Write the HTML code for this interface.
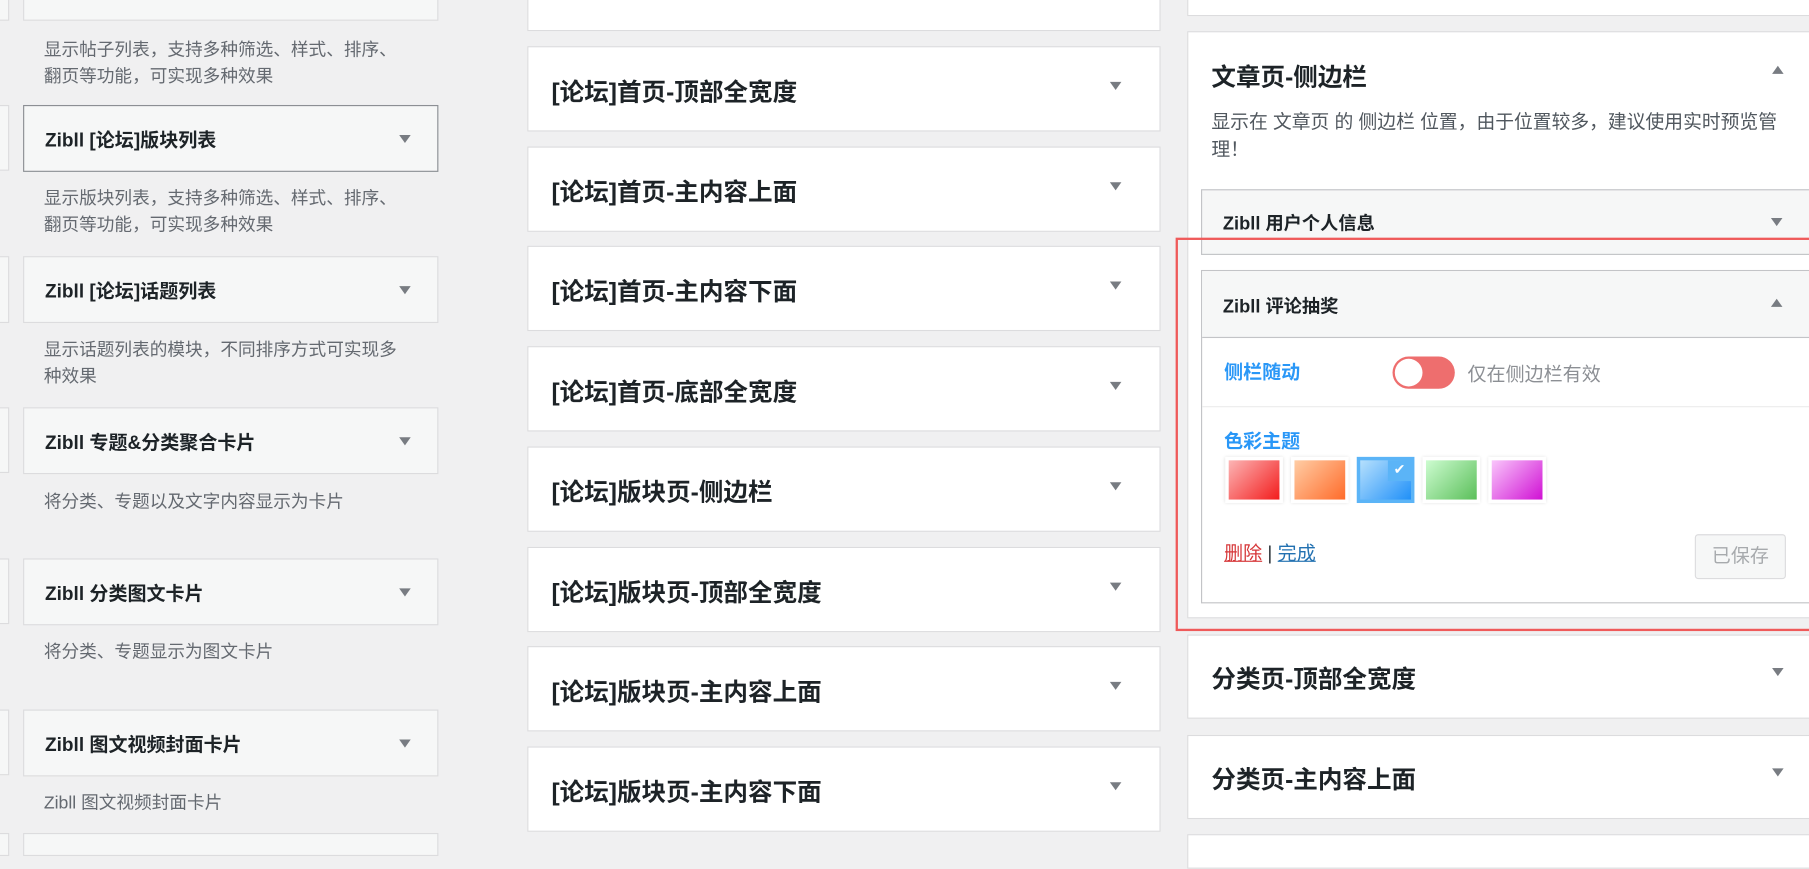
<!DOCTYPE html>
<html><head><meta charset="utf-8"><style>
html,body{margin:0;padding:0;width:1809px;height:843px;overflow:hidden;background:#f0f0f1;}
#w{position:absolute;left:0;top:0;width:1568px;height:731px;transform:scale(1.15370);transform-origin:0 0;font-family:"Liberation Sans","Noto Sans CJK SC",sans-serif;}
.a{position:absolute;box-sizing:border-box;}
.lb{background:#f6f7f7;border:1px solid #dcdcde;}
.lt{font-size:16.5px;font-weight:bold;color:#1d2327;left:18px;top:16px;position:absolute;white-space:nowrap;}
.ar{position:absolute;width:0;height:0;border-left:5px solid transparent;border-right:5px solid transparent;border-top:7px solid #787c82;}
.au{position:absolute;width:0;height:0;border-left:5px solid transparent;border-right:5px solid transparent;border-bottom:7px solid #787c82;}
.d{position:absolute;font-size:15.3px;color:#646970;line-height:23px;left:38px;width:330px;white-space:nowrap;}
.mb{background:#fff;border:1px solid #dcdcde;}
.mt{position:absolute;left:20px;font-size:21.3px;font-weight:bold;color:#1d2327;white-space:nowrap;}
</style></head><body><div id="w">
<div class="a lb" style="left:-10px;top:-5px;width:18px;height:23px"></div>
<div class="a lb" style="left:-10px;top:91px;width:18px;height:57px"></div>
<div class="a lb" style="left:-10px;top:222px;width:18px;height:58px"></div>
<div class="a lb" style="left:-10px;top:353px;width:18px;height:57px"></div>
<div class="a lb" style="left:-10px;top:484px;width:18px;height:57px"></div>
<div class="a lb" style="left:-10px;top:615px;width:18px;height:57px"></div>
<div class="a lb" style="left:-10px;top:722px;width:18px;height:20px"></div>
<div class="a lb" style="left:20px;top:-5px;width:360px;height:23px"></div>
<div class="d" style="top:32px">显示帖子列表，支持多种筛选、样式、排序、<br>翻页等功能，可实现多种效果</div>
<div class="a lb" style="left:20px;top:91px;width:360px;height:58px;border-color:#8c8f94"><span class="lt">Zibll [论坛]版块列表</span><i class="ar" style="left:325px;top:25px"></i></div>
<div class="d" style="top:161px">显示版块列表，支持多种筛选、样式、排序、<br>翻页等功能，可实现多种效果</div>
<div class="a lb" style="left:20px;top:222px;width:360px;height:58px"><span class="lt">Zibll [论坛]话题列表</span><i class="ar" style="left:325px;top:25px"></i></div>
<div class="d" style="top:292px">显示话题列表的模块，不同排序方式可实现多<br>种效果</div>
<div class="a lb" style="left:20px;top:353px;width:360px;height:58px"><span class="lt">Zibll 专题&amp;分类聚合卡片</span><i class="ar" style="left:325px;top:25px"></i></div>
<div class="d" style="top:424px">将分类、专题以及文字内容显示为卡片</div>
<div class="a lb" style="left:20px;top:484px;width:360px;height:58px"><span class="lt">Zibll 分类图文卡片</span><i class="ar" style="left:325px;top:25px"></i></div>
<div class="d" style="top:554px">将分类、专题显示为图文卡片</div>
<div class="a lb" style="left:20px;top:615px;width:360px;height:58px"><span class="lt">Zibll 图文视频封面卡片</span><i class="ar" style="left:325px;top:25px"></i></div>
<div class="d" style="top:685px">Zibll 图文视频封面卡片</div>
<div class="a lb" style="left:20px;top:722px;width:360px;height:20px"></div>
<div class="a mb" style="left:457px;top:-5px;width:549px;height:32px"></div>
<div class="a mb" style="left:457px;top:40px;width:549px;height:74px"><span class="mt" style="top:22px">[论坛]首页-顶部全宽度</span><i class="ar" style="left:504px;top:30px"></i></div>
<div class="a mb" style="left:457px;top:127px;width:549px;height:74px"><span class="mt" style="top:22px">[论坛]首页-主内容上面</span><i class="ar" style="left:504px;top:30px"></i></div>
<div class="a mb" style="left:457px;top:213px;width:549px;height:74px"><span class="mt" style="top:22px">[论坛]首页-主内容下面</span><i class="ar" style="left:504px;top:30px"></i></div>
<div class="a mb" style="left:457px;top:300px;width:549px;height:74px"><span class="mt" style="top:22px">[论坛]首页-底部全宽度</span><i class="ar" style="left:504px;top:30px"></i></div>
<div class="a mb" style="left:457px;top:387px;width:549px;height:74px"><span class="mt" style="top:22px">[论坛]版块页-侧边栏</span><i class="ar" style="left:504px;top:30px"></i></div>
<div class="a mb" style="left:457px;top:474px;width:549px;height:74px"><span class="mt" style="top:22px">[论坛]版块页-顶部全宽度</span><i class="ar" style="left:504px;top:30px"></i></div>
<div class="a mb" style="left:457px;top:560px;width:549px;height:74px"><span class="mt" style="top:22px">[论坛]版块页-主内容上面</span><i class="ar" style="left:504px;top:30px"></i></div>
<div class="a mb" style="left:457px;top:647px;width:549px;height:74px"><span class="mt" style="top:22px">[论坛]版块页-主内容下面</span><i class="ar" style="left:504px;top:30px"></i></div>
<div class="a mb" style="left:1029px;top:-5px;width:550px;height:19px"></div>
<div class="a mb" style="left:1029px;top:27px;width:550px;height:509px">
 <span class="mt" style="top:22px">文章页-侧边栏</span><i class="au" style="left:506px;top:29px"></i>
 <div style="position:absolute;left:20px;top:66px;width:500px;font-size:16.3px;line-height:24px;color:#50575e">显示在 文章页 的 侧边栏 位置，由于位置较多，建议使用实时预览管理！</div>
</div>
<div class="a lb" style="left:1041px;top:164px;width:540px;height:57px;border-color:#c3c4c7"><span class="lt" style="top:16px;font-size:15.8px">Zibll 用户个人信息</span><i class="ar" style="left:493px;top:24px"></i></div>
<div class="a" style="left:1041px;top:234px;width:540px;height:289px;background:#fff;border:1px solid #c3c4c7">
 <div style="position:absolute;left:0;top:0;right:0;height:57px;background:#f6f7f7;border-bottom:1px solid #c3c4c7"><span class="lt" style="top:18px;font-size:15.8px">Zibll 评论抽奖</span><i class="au" style="left:493px;top:24px"></i></div>
 <span style="position:absolute;left:19px;top:74px;color:#2997f7;font-weight:bold;font-size:16.5px">侧栏随动</span>
 <div style="position:absolute;left:165px;top:74px;width:54px;height:28px;border-radius:14px;background:#ee6e6e"><div style="position:absolute;left:2px;top:2px;width:24px;height:24px;border-radius:50%;background:#fff"></div></div>
 <span style="position:absolute;left:230px;top:76px;color:#8c8f94;font-size:16.5px">仅在侧边栏有效</span>
 <div style="position:absolute;left:0;right:0;top:117px;border-top:1px solid #ececec"></div>
 <span style="position:absolute;left:19px;top:134px;color:#2997f7;font-weight:bold;font-size:16.5px">色彩主题</span>
 <div style="position:absolute;left:20px;top:161px;width:50px;height:40px;box-shadow:0 0 3px #ddd;background:#fff"><div style="margin:3px;height:34px;background:linear-gradient(135deg,#fcb5b5,#f31c1c)"></div></div>
 <div style="position:absolute;left:77px;top:161px;width:50px;height:40px;box-shadow:0 0 3px #ddd;background:#fff"><div style="margin:3px;height:34px;background:linear-gradient(135deg,#ffcda5,#ff6b2a)"></div></div>
 <div style="position:absolute;left:134px;top:161px;width:50px;height:40px;background:#5bb4f7"><div style="margin:3px;height:34px;background:linear-gradient(135deg,#b6e0fd,#2090f8)"></div><div style="position:absolute;right:3px;top:3px;width:20px;height:18px;background:#5bb4f7;color:#fff;font-size:12px;text-align:center;line-height:16px">✔</div></div>
 <div style="position:absolute;left:191px;top:161px;width:50px;height:40px;box-shadow:0 0 3px #ddd;background:#fff"><div style="margin:3px;height:34px;background:linear-gradient(135deg,#cdfcd0,#5bbf5a)"></div></div>
 <div style="position:absolute;left:248px;top:161px;width:50px;height:40px;box-shadow:0 0 3px #ddd;background:#fff"><div style="margin:3px;height:34px;background:linear-gradient(135deg,#f9c6fb,#d011d4)"></div></div>
 <span style="position:absolute;left:19px;top:231px;font-size:16.5px;color:#2c3338"><u style="color:#d63638">删除</u> | <u style="color:#2271b1">完成</u></span>
 <div style="position:absolute;left:427px;top:228px;width:79px;height:39px;box-sizing:border-box;background:#f6f7f7;border:1px solid #dcdcde;border-radius:3px;color:#a7aaad;font-size:16.5px;text-align:center;line-height:37px">已保存</div>
</div>
<div class="a" style="left:1019px;top:206px;width:560px;height:341px;border:2px solid #ef5a5a"></div>
<div class="a mb" style="left:1029px;top:550px;width:550px;height:73px"><span class="mt" style="top:21px">分类页-顶部全宽度</span><i class="ar" style="left:506px;top:28px"></i></div>
<div class="a mb" style="left:1029px;top:637px;width:550px;height:73px"><span class="mt" style="top:21px">分类页-主内容上面</span><i class="ar" style="left:506px;top:28px"></i></div>
<div class="a mb" style="left:1029px;top:723px;width:550px;height:30px"></div>
</div></body></html>
